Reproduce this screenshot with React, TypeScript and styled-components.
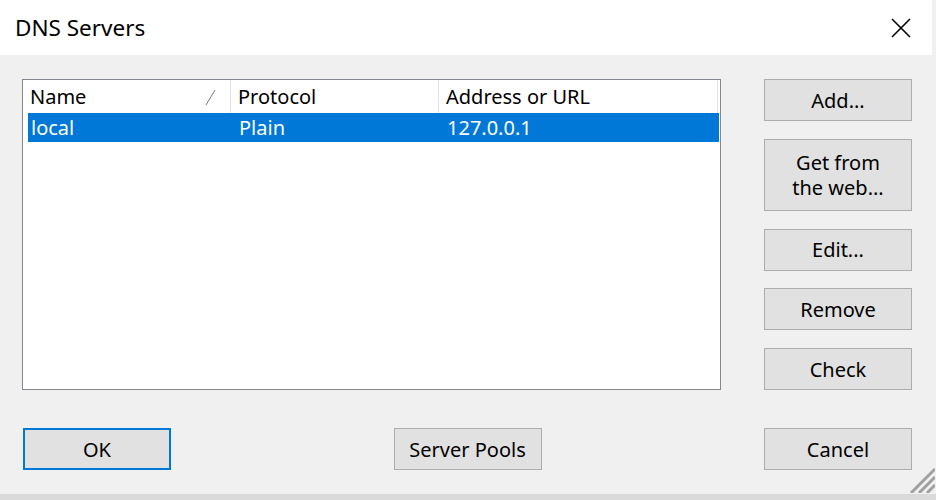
import React from "react";
import styled, { createGlobalStyle } from "styled-components";

const Global = createGlobalStyle`
  html, body { margin: 0; padding: 0; }
  body {
    background: #dadada;
    font-family: "Noto Sans", "Open Sans", "Liberation Sans", sans-serif;
    width: 936px;
    height: 500px;
    overflow: hidden;
  }
`;

const Window = styled.div`
  position: relative;
  width: 936px;
  height: 494px;
  background: #f0f0f0;
  display: flex;
  flex-direction: column;
  box-sizing: border-box;
`;

const TitleBar = styled.div`
  height: 55px;
  margin-right: 4px;
  background: #ffffff;
  display: flex;
  align-items: center;
  justify-content: space-between;
  padding-left: 15px;
  padding-right: 21px;
  box-sizing: border-box;
`;

const Title = styled.div`
  font-size: 22.5px;
  color: #000;
  padding-bottom: 1px;
`;

const CloseIcon = styled.svg`
  width: 20px;
  height: 20px;
  display: block;
`;

const Body = styled.div`
  flex: 1;
  display: flex;
  flex-direction: column;
  padding: 24px 24px 23px 22px;
  box-sizing: border-box;
`;

const TopArea = styled.div`
  display: flex;
  justify-content: space-between;
  height: 311px;
`;

const ListBox = styled.div`
  width: 699px;
  height: 311px;
  box-sizing: border-box;
  border: 1px solid #828790;
  background: #ffffff;
  display: flex;
  flex-direction: column;
  font-size: 20px;
`;

const HeaderRow = styled.div`
  display: grid;
  grid-template-columns: 208px 208px 279px 1fr;
  height: 33px;
`;

const HeaderCell = styled.div<{ $sep?: boolean }>`
  position: relative;
  display: flex;
  align-items: center;
  padding-left: 7px;
  color: #000;
  border-right: ${(p) => (p.$sep ? "1px solid #e5e5e5" : "none")};
  box-sizing: border-box;
  white-space: nowrap;
`;

const SortMark = styled.svg`
  position: absolute;
  left: 182px;
  top: 9px;
  width: 11px;
  height: 17px;
`;

const DataRow = styled.div<{ $selected?: boolean }>`
  display: grid;
  grid-template-columns: 203px 208px 1fr;
  height: 29px;
  margin-left: 5px;
  margin-right: 1px;
  background: ${(p) => (p.$selected ? "#0078d7" : "transparent")};
  color: ${(p) => (p.$selected ? "#ffffff" : "#000")};
`;

const DataCell = styled.div<{ $first?: boolean }>`
  display: flex;
  align-items: center;
  padding-left: ${(p) => (p.$first ? "3px" : "8px")};
  white-space: nowrap;
`;

const SideButtons = styled.div`
  width: 148px;
  display: flex;
  flex-direction: column;
  justify-content: space-between;
`;

const Button = styled.button<{ $tall?: boolean; $default?: boolean }>`
  width: 148px;
  height: ${(p) => (p.$tall ? "72px" : "42px")};
  box-sizing: border-box;
  background: #e1e1e1;
  border: ${(p) => (p.$default ? "2px solid #0078d7" : "1px solid #adadad")};
  font-family: inherit;
  font-size: 20px;
  line-height: 25px;
  color: #000;
  padding: 0;
  margin: 0;
  display: flex;
  align-items: center;
  justify-content: center;
  text-align: center;
  white-space: pre-line;
`;

const BottomRow = styled.div`
  margin-top: 38px;
  display: flex;
  justify-content: space-between;
  padding-left: 1px;
`;

const Grip = styled.svg`
  position: absolute;
  right: 1px;
  bottom: 1px;
  width: 26px;
  height: 26px;
`;

export default function App() {
  return (
    <>
      <Global />
      <Window>
        <TitleBar>
          <Title>DNS Servers</Title>
          <CloseIcon viewBox="0 0 20 20">
            <path d="M1 1 L19 19 M19 1 L1 19" stroke="#000" strokeWidth="1.6" fill="none" />
          </CloseIcon>
        </TitleBar>
        <Body>
          <TopArea>
            <ListBox>
              <HeaderRow>
                <HeaderCell $sep>
                  Name
                  <SortMark viewBox="0 0 11 17">
                    <path d="M1 16 L10 1" stroke="#7a7a7a" strokeWidth="1" fill="none" />
                  </SortMark>
                </HeaderCell>
                <HeaderCell $sep>Protocol</HeaderCell>
                <HeaderCell $sep>Address or URL</HeaderCell>
                <HeaderCell />
              </HeaderRow>
              <DataRow $selected>
                <DataCell $first>local</DataCell>
                <DataCell>Plain</DataCell>
                <DataCell>127.0.0.1</DataCell>
              </DataRow>
            </ListBox>
            <SideButtons>
              <Button>Add...</Button>
              <Button $tall>{"Get from\nthe web..."}</Button>
              <Button>Edit...</Button>
              <Button>Remove</Button>
              <Button>Check</Button>
            </SideButtons>
          </TopArea>
          <BottomRow>
            <Button $default>OK</Button>
            <Button>Server Pools</Button>
            <Button>Cancel</Button>
          </BottomRow>
        </Body>
        <Grip viewBox="0 0 26 26">
          <path
            d="M26 2 L2 26 M26 10 L10 26 M26 18 L18 26"
            stroke="#a0a0a0"
            strokeWidth="3"
            fill="none"
          />
        </Grip>
      </Window>
    </>
  );
}
